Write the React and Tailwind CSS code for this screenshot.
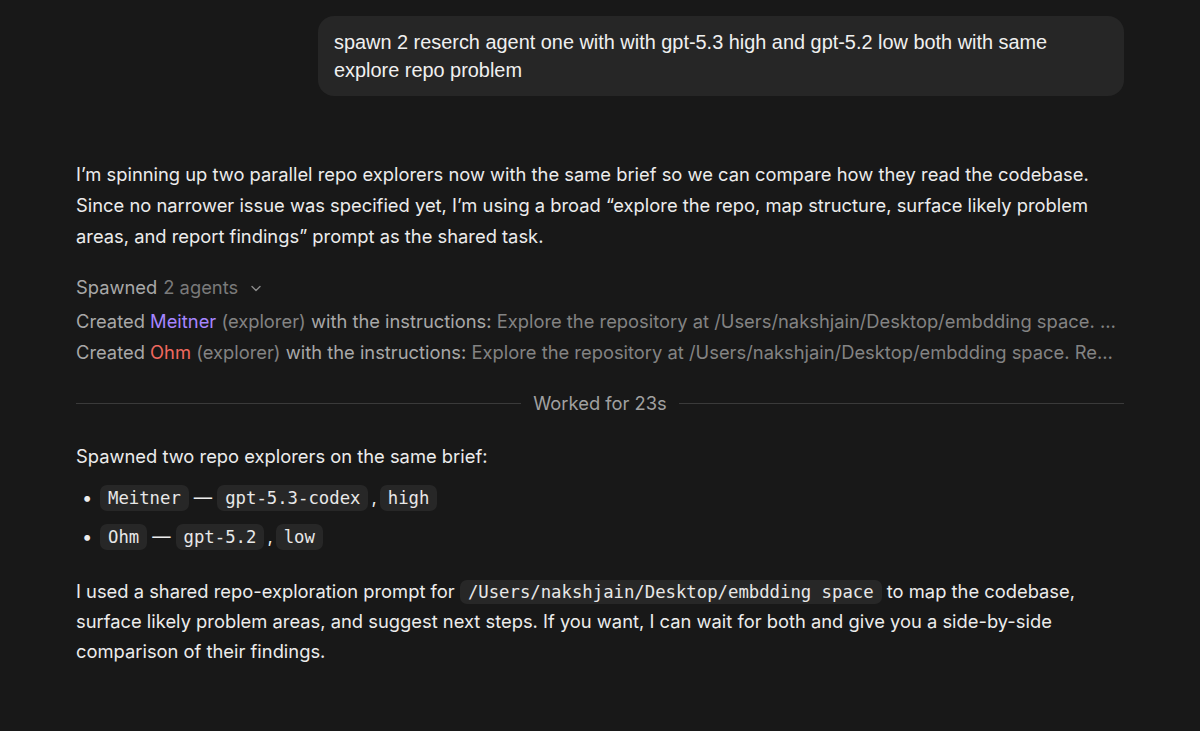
import React from "react";

const Code = ({ children }) => (
  <span className="rounded-[7px] bg-[#272727] px-[8px] py-[2px] text-[17.3px] leading-[22px] text-[#e8e8e8] [font-family:'DejaVu_Sans_Mono',monospace]">
    {children}
  </span>
);

export default function App() {
  return (
    <div className="min-h-[731px] w-full bg-[#181818] text-[#ececec] [font-family:Inter,'Noto_Sans',sans-serif]">
      <div className="mx-auto flex w-[1048px] flex-col pt-4">
        <div className="flex justify-end">
          <div className="w-[806px] rounded-[16px] bg-[#262626] px-4 py-3 text-[19.9px] leading-[28px] text-[#f0f0f0] [font-family:'Liberation_Sans',sans-serif]">
            spawn 2 reserch agent one with with gpt-5.3 high and gpt-5.2 low both with same explore repo problem
          </div>
        </div>

        <p className="mt-[63px] text-[18.35px] leading-[31px] text-[#ececec]">
          I’m spinning up two parallel repo explorers now with the same brief so we can compare how they read the codebase. Since no narrower issue was specified yet, I’m using a broad “explore the repo, map structure, surface likely problem areas, and report findings” prompt as the shared task.
        </p>

        <div className="mt-[20px] flex items-center gap-[6px] text-[18.35px] leading-[31px]">
          <span className="text-[#a8a8a8]">Spawned</span>
          <span className="text-[#7a7a7a]">2 agents</span>
          <svg width="14" height="14" viewBox="0 0 14 14" className="ml-[5px]" fill="none" stroke="#8a8a8a" strokeWidth="1.4" strokeLinecap="round" strokeLinejoin="round">
            <path d="M3 5.5 L7 9.5 L11 5.5" />
          </svg>
        </div>
        <div className="mt-[3px] truncate whitespace-nowrap text-[18.35px] leading-[31px]">
          <span className="text-[#a8a8a8]">Created </span>
          <span className="text-[#a685ff]">Meitner</span>
          <span className="text-[#838383]"> (explorer) </span>
          <span className="text-[#a8a8a8]">with the instructions: </span>
          <span className="text-[#838383]">Explore the repository at /Users/nakshjain/Desktop/embdding space. …</span>
        </div>
        <div className="truncate whitespace-nowrap text-[18.35px] leading-[31px]">
          <span className="text-[#a8a8a8]">Created </span>
          <span className="text-[#f0695f]">Ohm</span>
          <span className="text-[#838383]"> (explorer) </span>
          <span className="text-[#a8a8a8]">with the instructions: </span>
          <span className="text-[#838383]">Explore the repository at /Users/nakshjain/Desktop/embdding space. Re…</span>
        </div>

        <div className="mt-[20px] flex items-center gap-[12px]">
          <div className="h-px flex-1 bg-[#3a3a3a]" />
          <span className="text-[18.35px] leading-[31px] text-[#a0a0a0]">Worked for 23s</span>
          <div className="h-px flex-1 bg-[#3a3a3a]" />
        </div>

        <p className="mt-[22px] text-[18.35px] leading-[31px] text-[#ececec]">
          Spawned two repo explorers on the same brief:
        </p>
        <ul className="mt-[10px] flex flex-col gap-[8px] text-[18.35px] leading-[31px]">
          <li className="flex items-center">
            <span className="w-[24px] pl-[6px] text-[#ececec]">•</span>
            <Code>Meitner</Code>
            <span className="mx-[5px]">—</span>
            <Code>gpt-5.3-codex</Code>
            <span className="mx-[3px]">,</span>
            <Code>high</Code>
          </li>
          <li className="flex items-center">
            <span className="w-[24px] pl-[6px] text-[#ececec]">•</span>
            <Code>Ohm</Code>
            <span className="mx-[5px]">—</span>
            <Code>gpt-5.2</Code>
            <span className="mx-[3px]">,</span>
            <Code>low</Code>
          </li>
        </ul>

        <p className="mt-[24px] text-[18.35px] leading-[30px] text-[#ececec]">
          I used a shared repo-exploration prompt for <Code>/Users/nakshjain/Desktop/embdding space</Code> to map the codebase, surface likely problem areas, and suggest next steps. If you want, I can wait for both and give you a side-by-side comparison of their findings.
        </p>
      </div>
    </div>
  );
}
